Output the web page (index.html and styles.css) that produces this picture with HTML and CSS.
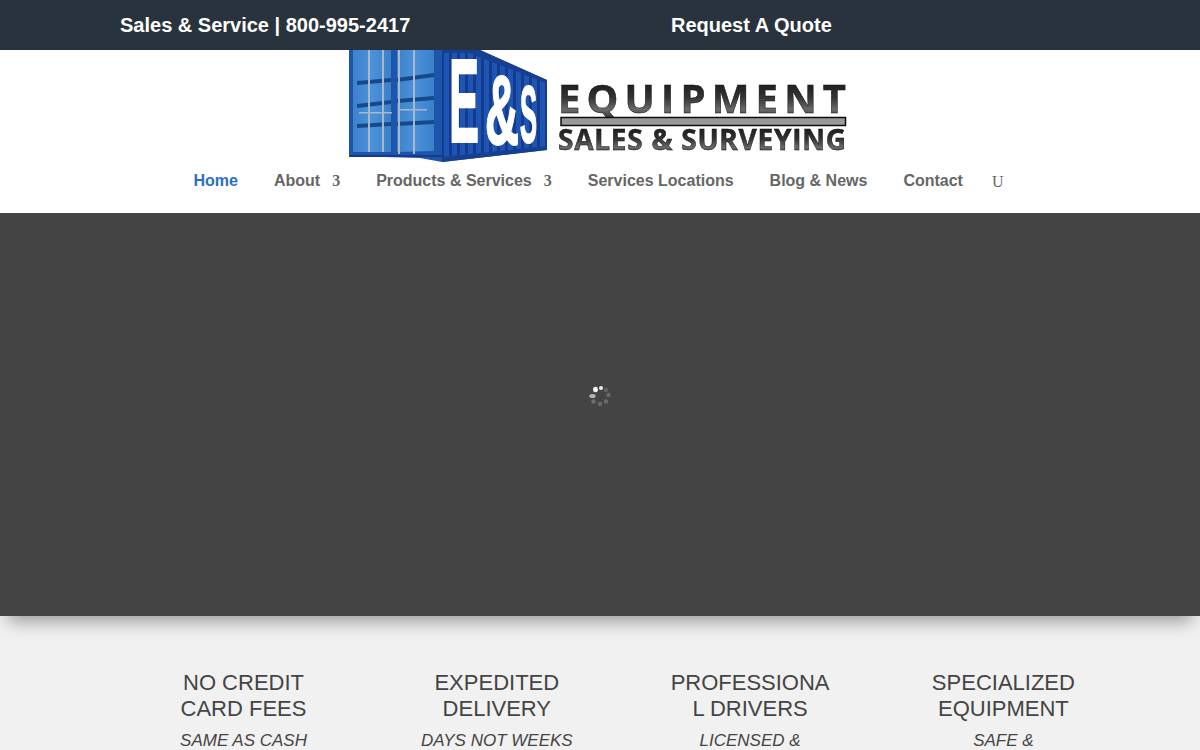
FILE: index.html
```html
<!DOCTYPE html>
<html lang="en">
<head>
    <meta charset="UTF-8">
    <meta name="viewport" content="width=device-width, initial-scale=1.0">
    <title>E&amp;S Equipment Sales &amp; Surveying</title>
    <link rel="stylesheet" href="styles.css">
</head>
<body>
    <div class="page">
        <!-- Top contact bar -->
        <div class="topbar">
            <span class="topbar-phone">Sales &amp; Service | 800-995-2417</span>
            <span>Request A Quote</span>
        </div>

        <header class="header">
            <svg class="logo" width="500" height="113" viewBox="0 0 500 113">
                <defs>
                    <linearGradient id="door" x1="0" y1="0" x2="1" y2="0">
                        <stop offset="0" stop-color="#3d82cc"/>
                        <stop offset="0.5" stop-color="#4b92da"/>
                        <stop offset="1" stop-color="#3a7fca"/>
                    </linearGradient>
                    <linearGradient id="chrome" x1="0" y1="0" x2="0" y2="1">
                        <stop offset="0" stop-color="#0c0c0c"/>
                        <stop offset="0.5" stop-color="#333"/>
                        <stop offset="0.72" stop-color="#6a6a6a"/>
                        <stop offset="1" stop-color="#0c0c0c"/>
                    </linearGradient>
                    <pattern id="ribs" width="8" height="10" patternUnits="userSpaceOnUse">
                        <rect width="8" height="10" fill="#1f55b4"/>
                        <rect x="4" width="3" height="10" fill="#123a8c"/>
                    </pattern>
                    <filter id="soft"><feGaussianBlur stdDeviation="0.35"/></filter>
                    <filter id="spin-soft"><feGaussianBlur stdDeviation="0.6"/></filter>
                </defs>
                <g filter="url(#soft)">
                    <!-- container side -->
                    <polygon points="93,0 131,0 198,30 198,100 93,112" fill="url(#ribs)"/>
                    <polygon points="93,0 131,0 198,30 197,33 120,3 93,3" fill="#16408f"/>
                    <polygon points="93,112 198,100 198,96 93,107" fill="#16408f"/>
                    <!-- container doors -->
                    <polygon points="0,0 93,0 93,112 71,108 0,106" fill="#1d55aa"/>
                    <polygon points="4,0 42,0 42,102 4,102" fill="url(#door)"/>
                    <polygon points="48,0 85,0 85,101 48,102" fill="url(#door)"/>
                    <g class="door-bands">
                        <polygon points="8,31 42,28 42,32 8,35"/>
                        <polygon points="48,28 85,23 85,27 48,32"/>
                        <polygon points="8,54 42,50 42,54 8,58"/>
                        <polygon points="48,49 85,46 85,50 48,53"/>
                        <polygon points="8,74 42,72 42,76 8,78"/>
                        <polygon points="48,72 85,70 85,74 48,76"/>
                    </g>
                    <g class="door-bars">
                        <rect x="19" y="0" width="2" height="102"/>
                        <rect x="33" y="0" width="2" height="102"/>
                        <rect x="49" y="0" width="2" height="104"/>
                        <rect x="64" y="0" width="2" height="104"/>
                        <rect x="10" y="62" width="33" height="1.5"/>
                        <rect x="51" y="59" width="27" height="1.5"/>
                    </g>
                    <rect x="0" y="105" width="93" height="2" fill="#123a8c"/>
                    <!-- big letters -->
                    <g class="logo-big">
                        <text transform="translate(100,92) scale(1,1.65)" font-size="72" textLength="30" lengthAdjust="spacingAndGlyphs">E</text>
                        <text transform="translate(136,94) scale(1,1.5)" font-size="66" textLength="34" lengthAdjust="spacingAndGlyphs">&amp;</text>
                        <text transform="translate(171,92) scale(1,1.55)" font-size="52" textLength="17" lengthAdjust="spacingAndGlyphs">S</text>
                    </g>
                    <!-- wordmark -->
                    <text class="logo-word" x="209" y="63" font-size="40" textLength="288" fill="url(#chrome)">EQUIPMENT</text>
                    <rect x="212" y="67.5" width="284.5" height="8" fill="#999" stroke="#111" stroke-width="1.5"/>
                    <text class="logo-word" x="209" y="100" font-size="28" textLength="288" fill="url(#chrome)">SALES &amp; SURVEYING</text>
                </g>
            </svg>
            <nav class="nav">
                <a class="active">Home</a>
                <a>About<span class="nav-icon">3</span></a>
                <a>Products &amp; Services<span class="nav-icon">3</span></a>
                <a>Services Locations</a>
                <a>Blog &amp; News</a>
                <a>Contact</a>
                <span class="nav-search">U</span>
            </nav>
        </header>

        <!-- Slider still loading -->
        <section class="hero">
            <svg class="spinner" width="24" height="24" viewBox="0 0 24 24">
                <g filter="url(#spin-soft)">
                    <circle cx="13" cy="4" r="2" opacity="0.9"/>
                    <ellipse cx="7.5" cy="5.5" rx="2.4" ry="2.8" opacity="0.95"/>
                    <ellipse cx="4.5" cy="12" rx="3.2" ry="2" opacity="0.6"/>
                    <circle cx="5.5" cy="17.5" r="2.2" opacity="0.22"/>
                    <circle cx="12" cy="20" r="2.2" opacity="0.2"/>
                    <circle cx="18" cy="17.5" r="2.2" opacity="0.2"/>
                    <circle cx="20.5" cy="11" r="2.2" opacity="0.2"/>
                    <circle cx="18" cy="6" r="2.2" opacity="0.15"/>
                </g>
            </svg>
        </section>

        <section class="features">
            <div class="feature">
                <h3>NO CREDIT CARD FEES</h3>
                <p>SAME AS CASH</p>
            </div>
            <div class="feature">
                <h3>EXPEDITED DELIVERY</h3>
                <p>DAYS NOT WEEKS</p>
            </div>
            <div class="feature">
                <h3>PROFESSIONAL DRIVERS</h3>
                <p>LICENSED &amp;</p>
            </div>
            <div class="feature">
                <h3>SPECIALIZED EQUIPMENT</h3>
                <p>SAFE &amp;</p>
            </div>
        </section>
    </div>
</body>
</html>
```

FILE: styles.css
```css
html, body { margin: 0; padding: 0; }
body { font-family: "Liberation Sans", Arial, sans-serif; background-color: #f1f1f1; color: #444; }
.page { height: 100vh; overflow: hidden; }

.topbar { display: flex; height: 50px; align-items: center; padding-left: 120px; background-color: #29333d; color: #fff; font-size: 20px; font-weight: bold; }
.topbar-phone { width: 551px; }

.header { display: flex; flex-direction: column; align-items: center; height: 163px; background-color: #fff; }
.logo { display: block; flex: none; margin-left: -2px; }
.door-bands { fill: #174a8c; }
.door-bars { fill: #a9b8c8; }
.logo-big text { font-family: "Liberation Sans", Arial, sans-serif; font-weight: bold; fill: #fff; stroke: #fff; stroke-width: 1.2; }
.logo-word { font-family: "Open Sans", sans-serif; font-weight: bold; stroke: #111; stroke-width: 0.5; }

.nav { display: flex; align-items: center; gap: 36px; height: 36px; padding-right: 3px; font-size: 16px; font-weight: bold; color: #666; }
.nav a.active { color: #2a6fc4; }
.nav-icon { margin-left: 12px; font-family: "Liberation Serif", serif; }
.nav-search { margin-left: -7px; font-family: "Liberation Serif", serif; font-weight: normal; line-height: 1; padding-top: 2px; }

.hero { display: flex; align-items: center; justify-content: center; height: 403px; background-color: #444; box-shadow: 0 14px 16px -8px rgba(0,0,0,0.35); }
.spinner { fill: #fff; margin-top: -37px; }

.features { display: grid; grid-template-columns: repeat(4, 165px); gap: 88.3px; padding: 54px 0 0 161px; text-align: center; }
.feature h3 { margin: 0; font-size: 22px; font-weight: normal; line-height: 26px; overflow-wrap: anywhere; }
.feature p { margin: 7px 0 0; font-size: 17px; font-style: italic; line-height: 24px; }
```
